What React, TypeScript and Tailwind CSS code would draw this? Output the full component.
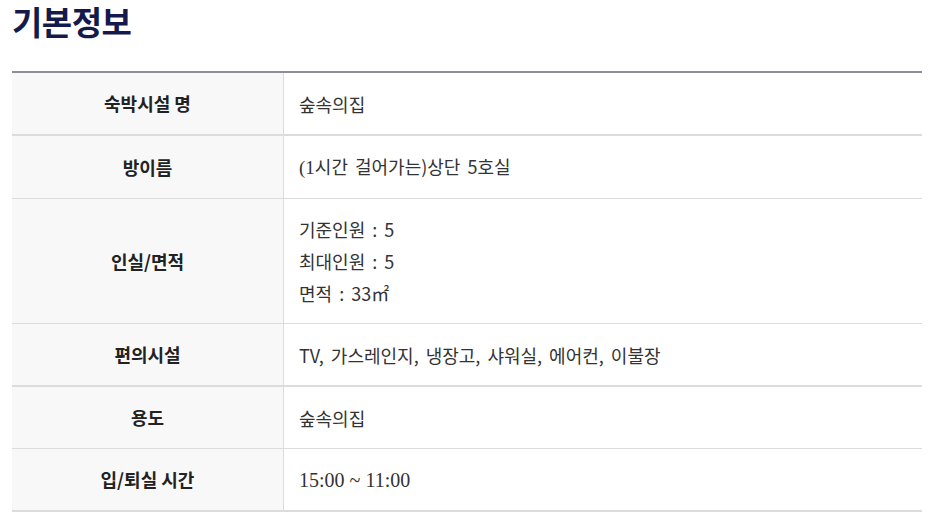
const rows: { label: string; lines: React.ReactNode[]; thick?: boolean }[] = [
  { label: '숙박시설 명', lines: ['숲속의집'], thick: true },
  {
    label: '방이름',
    lines: [
      <>
        <span className="font-['Liberation_Serif',serif] text-[19px]">(1</span>시간 걸어가는)상단 5호실
      </>,
    ],
  },
  { label: '인실/면적', lines: ['기준인원 : 5', '최대인원 : 5', '면적 : 33㎡'] },
  { label: '편의시설', lines: ['TV, 가스레인지, 냉장고, 샤워실, 에어컨, 이불장'], thick: true },
  { label: '용도', lines: ['숲속의집'] },
  {
    label: '입/퇴실 시간',
    lines: [<span className="font-['Liberation_Serif',serif] text-[20px] [word-spacing:0px]">15:00 ~ 11:00</span>],
    thick: true,
  },
]

export default function App() {
  return (
    <div className="w-[946px] h-[517px] bg-white px-3 pt-[1px] font-['Noto_Sans_CJK_KR','Noto_Sans',sans-serif]">
      <h2 className="text-[33px] leading-[40px] font-bold text-[#141a4b] tracking-[-0.5px]">기본정보</h2>

      <div className="mt-[30px] w-[910px] border-t-2 border-[#8e8e99]">
        {rows.map((row) => (
          <div
            key={row.label}
            className={`flex border-b border-[#dcdcdf] ${row.thick ? 'border-b-2' : ''}`}
          >
            <div className="w-[272px] shrink-0 bg-[#f8f8f8] border-r border-[#dcdcdf] flex items-center justify-center text-[18px] font-bold text-[#222]">
              {row.label}
            </div>
            <div className="flex-1 pl-[15px] py-[14px] flex flex-col justify-center text-[18px] text-[#333] leading-[32px] min-h-[61px] [word-spacing:3px]">
              {row.lines.map((l, i) => (
                <div key={i}>{l}</div>
              ))}
            </div>
          </div>
        ))}
      </div>
    </div>
  )
}
